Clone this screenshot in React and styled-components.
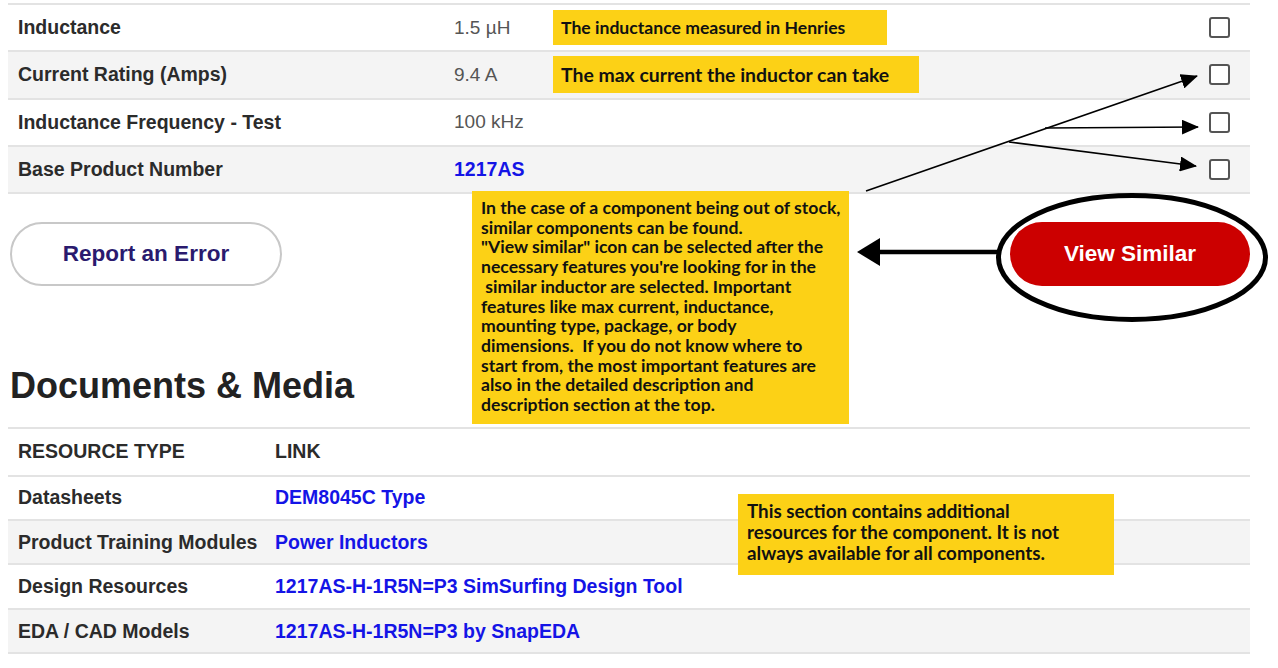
import React from 'react';
import styled, { createGlobalStyle } from 'styled-components';

const GlobalStyle = createGlobalStyle`
  html, body {
    margin: 0;
    padding: 0;
    background: #fff;
    font-family: "Liberation Sans", Arial, sans-serif;
  }
`;

const Page = styled.div`
  position: relative;
  width: 1278px;
  height: 668px;
  overflow: hidden;
  box-sizing: border-box;
  padding: 3px 28px 0 8px;
`;

const Table = styled.div`
  border-top: 2px solid #e3e3e3;
`;

const Row = styled.div`
  display: flex;
  align-items: center;
  box-sizing: border-box;
  height: ${p => p.h}px;
  padding-left: 10px;
  border-bottom: 2px solid #e3e3e3;
  background: ${p => (p.shaded ? '#f4f4f4' : '#fff')};
`;

const Label = styled.div`
  width: ${p => p.w}px;
  flex-shrink: 0;
  font-size: 19.5px;
  font-weight: 700;
  color: #2b2b2b;
  white-space: nowrap;
`;

const Value = styled.div`
  flex: 1;
  font-size: 19px;
  color: #555;
`;

const Link = styled.a`
  font-size: 19.5px;
  font-weight: 700;
  color: #1414e6;
  text-decoration: none;
`;

const Checkbox = styled.span`
  width: 21px;
  height: 21px;
  box-sizing: border-box;
  border: 2px solid #555;
  border-radius: 3px;
  margin-right: 20px;
  background: #fff;
`;

const Actions = styled.div`
  display: flex;
  justify-content: space-between;
  align-items: center;
  margin-top: 28px;
  padding-left: 2px;
`;

const PillButton = styled.button`
  width: ${p => p.w}px;
  height: 64px;
  border-radius: 32px;
  font-family: "Liberation Sans", Arial, sans-serif;
  font-size: 22.5px;
  font-weight: 700;
  cursor: pointer;
  border: ${p => (p.primary ? 'none' : '2px solid #c8c8c8')};
  background: ${p => (p.primary ? '#cc0000' : '#fff')};
  color: ${p => (p.primary ? '#fff' : '#2a1a6e')};
`;

const Heading = styled.h2`
  margin: 79px 0 0 2px;
  font-size: 36px;
  line-height: 41px;
  font-weight: 700;
  color: #222;
`;

const DocTable = styled(Table)`
  margin-top: 21px;
`;

const Note = styled.div`
  position: absolute;
  left: ${p => p.x}px;
  top: ${p => p.y}px;
  width: ${p => p.w}px;
  height: ${p => p.h}px;
  box-sizing: border-box;
  padding: ${p => p.pad || '0 8px'};
  background: #fcd116;
  color: #111;
  font-family: Lato, "Open Sans", sans-serif;
  font-weight: 700;
  font-size: ${p => p.fs || 17.6}px;
  line-height: ${p => p.lh || 19.7}px;
  white-space: pre;
  display: flex;
  align-items: ${p => (p.center ? 'center' : 'flex-start')};
`;

const Overlay = styled.svg`
  position: absolute;
  left: 0;
  top: 0;
  pointer-events: none;
`;

const specs = [
  { label: 'Inductance', value: '1.5 µH' },
  { label: 'Current Rating (Amps)', value: '9.4 A', shaded: true },
  { label: 'Inductance Frequency - Test', value: '100 kHz' },
  { label: 'Base Product Number', value: '1217AS', link: true, shaded: true },
];

const docs = [
  { label: 'Datasheets', link: 'DEM8045C Type' },
  { label: 'Product Training Modules', link: 'Power Inductors', shaded: true },
  { label: 'Design Resources', link: '1217AS-H-1R5N=P3 SimSurfing Design Tool' },
  { label: 'EDA / CAD Models', link: '1217AS-H-1R5N=P3 by SnapEDA', shaded: true },
];

const similarNote = [
  'In the case of a component being out of stock,',
  'similar components can be found.',
  '"View similar" icon can be selected after the',
  "necessary features you're looking for in the",
  ' similar inductor are selected. Important',
  'features like max current, inductance,',
  'mounting type, package, or body',
  'dimensions.  If you do not know where to',
  'start from, the most important features are',
  'also in the detailed description and',
  'description section at the top.',
].join('\n');

const docsNote = [
  'This section contains additional',
  'resources for the component. It is not',
  'always available for all components.',
].join('\n');

function Annotations() {
  return (
    <Overlay width="1278" height="668" viewBox="0 0 1278 668">
      <defs>
        <marker id="head" markerUnits="userSpaceOnUse" markerWidth="17" markerHeight="15"
          refX="16" refY="7.5" orient="auto">
          <path d="M0 0 L17 7.5 L0 15 Z" fill="#000" />
        </marker>
      </defs>
      <g stroke="#000" strokeWidth="1.6" fill="none">
        <line x1="866" y1="191" x2="1197" y2="76" markerEnd="url(#head)" />
        <line x1="1045" y1="128" x2="1198" y2="127" markerEnd="url(#head)" />
        <line x1="1009" y1="142" x2="1196" y2="166" markerEnd="url(#head)" />
      </g>
      <ellipse cx="1132" cy="257.5" rx="133.5" ry="62" fill="none" stroke="#000" strokeWidth="5" />
      <line x1="997" y1="252" x2="876" y2="252" stroke="#000" strokeWidth="4.5" />
      <path d="M857 252 L880 238 L880 266 Z" fill="#000" />
    </Overlay>
  );
}

export default function App() {
  return (
    <>
      <GlobalStyle />
      <Page>
        <Table>
          {specs.map(s => (
            <Row key={s.label} h={47.3} shaded={s.shaded}>
              <Label w={436}>{s.label}</Label>
              <Value>{s.link ? <Link href="#">{s.value}</Link> : s.value}</Value>
              <Checkbox />
            </Row>
          ))}
        </Table>

        <Actions>
          <PillButton w={272}>Report an Error</PillButton>
          <PillButton w={240} primary>View Similar</PillButton>
        </Actions>

        <Heading>Documents &amp; Media</Heading>

        <DocTable>
          <Row h={47.5}>
            <Label w={257}>RESOURCE TYPE</Label>
            <Label w={200}>LINK</Label>
          </Row>
          {docs.map(d => (
            <Row key={d.label} h={44.4} shaded={d.shaded}>
              <Label w={257}>{d.label}</Label>
              <Link href="#">{d.link}</Link>
            </Row>
          ))}
        </DocTable>

        <Note x={553} y={10} w={334} h={35} center>The inductance measured in Henries</Note>
        <Note x={553} y={56} w={366} h={37} fs={19.4} center>The max current the inductor can take</Note>
        <Note x={472} y={191} w={377} h={233} pad="7px 9px">{similarNote}</Note>
        <Note x={738} y={494} w={376} h={81} pad="6px 9px" fs={18.8} lh={21}>{docsNote}</Note>

        <Annotations />
      </Page>
    </>
  );
}
